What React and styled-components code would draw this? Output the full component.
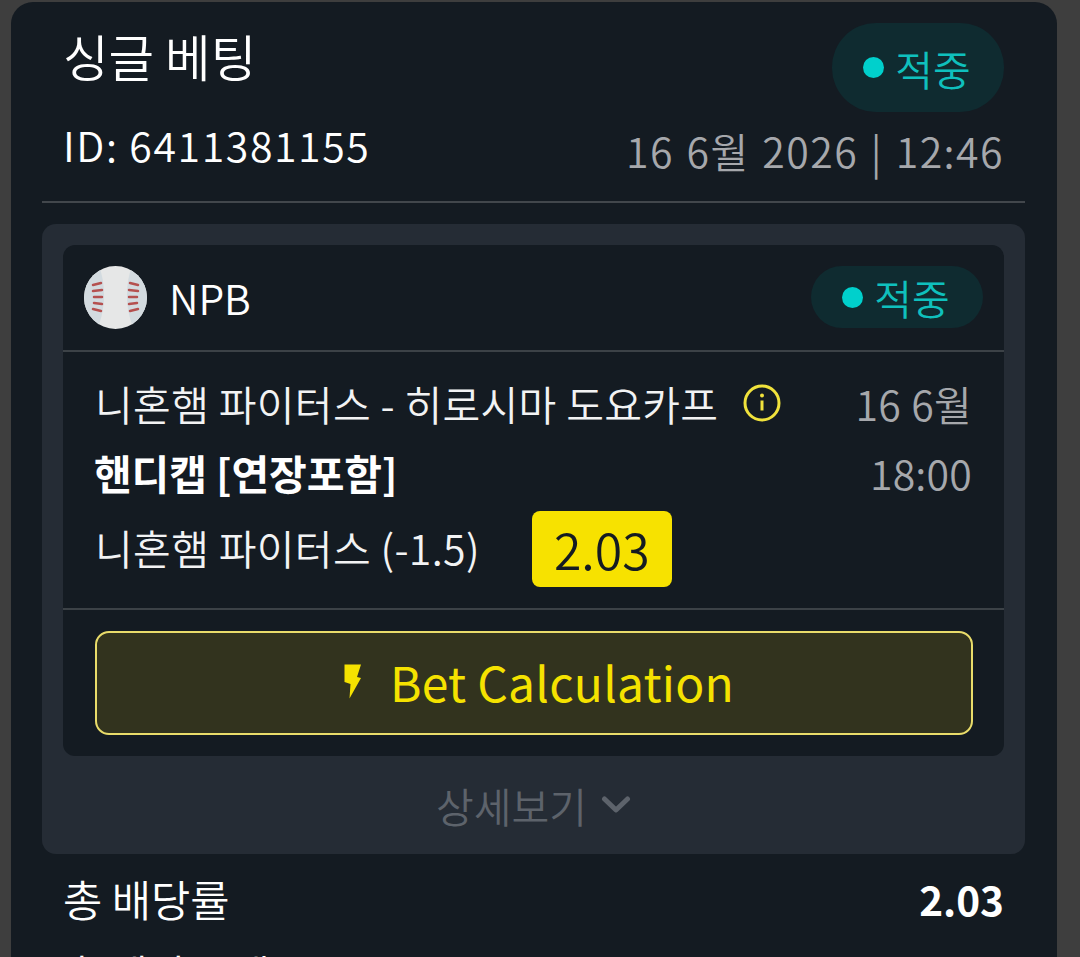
import React from 'react';
import styled, { createGlobalStyle } from 'styled-components';

const GlobalStyle = createGlobalStyle`
  html, body {
    margin: 0;
    padding: 0;
    height: 957px;
    overflow: hidden;
    background: #3e3e3e;
  }
  * { box-sizing: border-box; }
  body {
    font-family: "Noto Sans CJK KR", "Noto Sans", sans-serif;
    font-weight: 350;
  }
`;

const Page = styled.div`
  height: 957px;
  padding: 2px 23px 0 11px;
  overflow: hidden;
`;

const Card = styled.div`
  background: #141b22;
  border-radius: 22px 22px 0 0;
  height: 955px;
  padding: 21px 32px 0 31px;
  color: #fff;
`;

const TopRow = styled.div`
  display: flex;
  justify-content: space-between;
  align-items: flex-start;
  padding: 0 21px;
`;

const Title = styled.div`
  font-size: 49.5px;
  line-height: 66px;
`;

const Pill = styled.div`
  display: flex;
  align-items: center;
  justify-content: center;
  gap: 11px;
  width: 172px;
  height: ${p => (p.$big ? '89px' : '62px')};
  border-radius: ${p => (p.$big ? '44px' : '31px')};
  background: #0f2b30;
  color: #0fc0bd;
  font-size: 41px;
`;

const Dot = styled.span`
  width: 21px;
  height: 21px;
  margin-left: -2px;
  border-radius: 50%;
  background: #00d0cc;
`;

const MetaRow = styled.div`
  display: flex;
  justify-content: space-between;
  align-items: center;
  padding: 0 21px;
  height: 76px;
`;

const BetId = styled.div`
  font-size: 41px;
  letter-spacing: 1.6px;
  margin-top: -12px;
`;

const DateText = styled.div`
  font-size: 41px;
  color: #a6a8ac;
  letter-spacing: 1.45px;
  word-spacing: 2px;
`;

const Divider = styled.div`
  height: 2px;
  background: #42474c;
  margin-top: 13px;
`;

const Panel = styled.div`
  background: #252c35;
  border-radius: 14px;
  margin-top: 21px;
  padding: 21px 21px 0;
  height: 630px;
`;

const Inner = styled.div`
  background: #141b22;
  border-radius: 12px;
  height: 511px;
  display: flex;
  flex-direction: column;
`;

const LeagueRow = styled.div`
  display: flex;
  align-items: center;
  justify-content: space-between;
  height: 107px;
  padding: 0 21px 1px;
  border-bottom: 2px solid #3c4247;
`;

const League = styled.div`
  display: flex;
  align-items: center;
  gap: 22px;
  font-size: 41px;
  line-height: 58px;
`;

const MatchBlock = styled.div`
  height: 258px;
  padding: 15px 32px 0;
  border-bottom: 2px solid #3c4247;
  display: flex;
  flex-direction: column;
`;

const MatchRow = styled.div`
  display: flex;
  align-items: center;
  justify-content: space-between;
  height: ${p => p.$h}px;
`;

const Cell = styled.div`
  display: flex;
  align-items: center;
`;

const MatchName = styled.span`
  font-size: 41px;
  letter-spacing: 0.35px;
  color: #f2f3f4;
  padding-bottom: ${p => (p.$raised ? '4px' : '0')};
`;

const Market = styled.span`
  font-size: 41px;
  font-weight: 700;
  letter-spacing: -0.1px;
  margin-left: -1px;
`;

const Info = styled.span`
  display: inline-flex;
  margin-left: 25px;
`;

const Muted = styled.span`
  font-size: 41px;
  letter-spacing: 0.2px;
  word-spacing: 1px;
  color: #a6a8ac;
`;

const Odds = styled.span`
  display: flex;
  align-items: center;
  justify-content: center;
  width: 140px;
  height: 76px;
  margin-left: 52px;
  padding-bottom: 2px;
  border-radius: 8px;
  background: #f7e200;
  color: #141b22;
  font-size: 50px;
`;

const ButtonWrap = styled.div`
  padding: 21px 31px 0 32px;
`;

const CalcButton = styled.button`
  width: 100%;
  height: 104px;
  display: flex;
  align-items: center;
  justify-content: center;
  gap: 28px;
  padding: 0 0 4px 9px;
  border: 2px solid #e9dc6a;
  border-radius: 14px;
  background: #32331e;
  color: #f5e200;
  font-family: inherit;
  font-weight: 400;
  font-size: 48px;
  letter-spacing: 0.2px;
`;

const More = styled.div`
  display: flex;
  align-items: center;
  justify-content: center;
  gap: 14px;
  height: 98px;
  font-size: 41px;
  color: #5d636b;
`;

const TotalRow = styled.div`
  display: flex;
  align-items: center;
  justify-content: space-between;
  padding: 0 21px 4px;
  height: 92px;
`;

const TotalLabel = styled.span`
  font-size: 42.700px;
`;

const TotalValue = styled.span`
  font-size: 40.500px;
  font-weight: 700;
`;

const Cut = styled.div`
  padding: 0 21px;
  font-size: 41px;
  line-height: 52px;
`;

const Baseball = () => (
  <svg width="63" height="63" viewBox="0 0 63 63">
    <defs>
      <clipPath id="ball">
        <circle cx="31.5" cy="31.5" r="31.5" />
      </clipPath>
    </defs>
    <g clipPath="url(#ball)">
      <rect width="63" height="63" fill="#e6e7e7" />
      <path d="M15 0C22 18 22 44 13 63H-2V0z" fill="#d3dbe0" />
      <path d="M48 0C41 18 41 44 50 63h15V0z" fill="#d3dbe0" />
    </g>
    <g stroke="#b5504f" strokeWidth="2.500" strokeLinecap="round" fill="none">
      <path d="M9 19l8-2M9 25l9-1M10 31h8M10 37l8 1M9 43l8 2" />
      <path d="M54 19l-8-2M54 25l-9-1M53 31h-8M53 37l-8 1M54 43l-8 2" />
    </g>
  </svg>
);

const InfoIcon = () => (
  <svg width="38" height="38" viewBox="0 0 38 38" fill="none">
    <circle cx="19" cy="19" r="17" stroke="#f0e23c" strokeWidth="3" />
    <circle cx="19" cy="11.500" r="2" fill="#f0e23c" />
    <path d="M19 16.500v10" stroke="#f0e23c" strokeWidth="3" />
  </svg>
);

const Bolt = () => (
  <svg width="19" height="35" viewBox="0 0 19 35">
    <path d="M1.500.500H18L14 13l4 1L6.500 34.500 7.500 20l-6-2z" fill="#f5e200" />
  </svg>
);

const Chevron = () => (
  <svg width="30" height="20" viewBox="0 0 30 20" fill="none">
    <path d="M3.500 4L15 15 26.500 4" stroke="#5d636b" strokeWidth="5" strokeLinecap="round" strokeLinejoin="round" />
  </svg>
);

const Status = ({ big }) => (
  <Pill $big={big}>
    <Dot />
    적중
  </Pill>
);

export default function App() {
  return (
    <Page>
      <GlobalStyle />
      <Card>
        <TopRow>
          <Title>싱글 베팅</Title>
          <Status big />
        </TopRow>
        <MetaRow>
          <BetId>ID: 6411381155</BetId>
          <DateText>16 6월 2026 | 12:46</DateText>
        </MetaRow>
        <Divider />
        <Panel>
          <Inner>
            <LeagueRow>
              <League>
                <Baseball />
                NPB
              </League>
              <Status />
            </LeagueRow>
            <MatchBlock>
              <MatchRow $h={72}>
                <Cell>
                  <MatchName>니혼햄 파이터스 - 히로시마 도요카프</MatchName>
                  <Info><InfoIcon /></Info>
                </Cell>
                <Muted>16 6월</Muted>
              </MatchRow>
              <MatchRow $h={66}>
                <Market>핸디캡 [연장포함]</Market>
                <Muted>18:00</Muted>
              </MatchRow>
              <MatchRow $h={88}>
                <Cell>
                  <MatchName $raised>니혼햄 파이터스 (-1.5)</MatchName>
                  <Odds>2.03</Odds>
                </Cell>
              </MatchRow>
            </MatchBlock>
            <ButtonWrap>
              <CalcButton>
                <Bolt />
                Bet Calculation
              </CalcButton>
            </ButtonWrap>
          </Inner>
          <More>
            상세보기
            <Chevron />
          </More>
        </Panel>
        <TotalRow>
          <TotalLabel>총 배당률</TotalLabel>
          <TotalValue>2.03</TotalValue>
        </TotalRow>
        <Cut>총 베팅 금액</Cut>
      </Card>
    </Page>
  );
}
